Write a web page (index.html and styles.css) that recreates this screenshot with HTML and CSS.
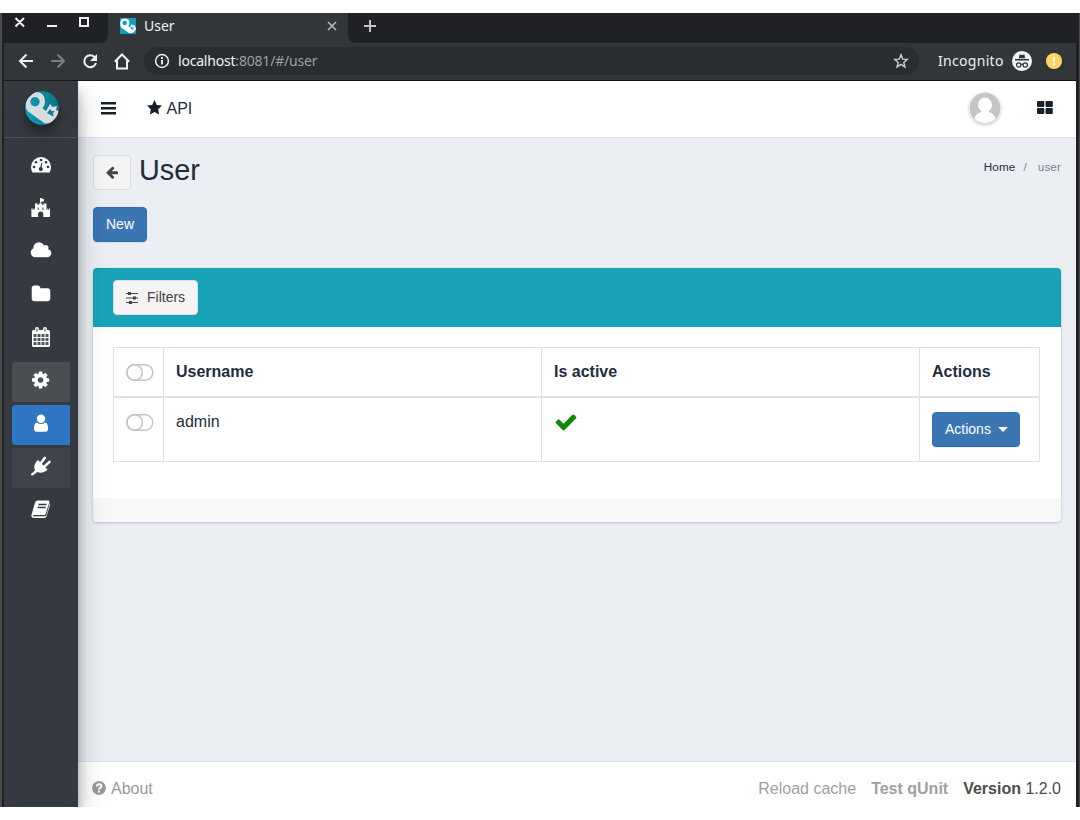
FILE: index.html
```html
<!DOCTYPE html>
<html lang="en">
<head>
<meta charset="utf-8">
<title>User</title>
<link rel="stylesheet" href="styles.css">
</head>
<body>
<svg class="defs" width="0" height="0">
  <defs>
    <linearGradient id="teal" x1="0" x2="1"><stop offset="0" stop-color="#0aa0bf"/><stop offset="1" stop-color="#0c7483"/></linearGradient>
    <clipPath id="round"><circle cx="17" cy="17" r="17"/></clipPath>
    <clipPath id="face"><circle cx="16" cy="16" r="15"/></clipPath>
    <g id="mark">
      <path fill-rule="evenodd" d="M.5 10.500 Q1 1 10.500 1 Q20 1 20 10.500 Q20 14 17.500 17.500 L21 20 L25 13 L27.500 16 L32 15 L31 19 L34 20 L33 26 L27 32 L20 32.500 L3 20.500 Q.5 18 .5 10.500Z M10 6 A4.700 4.700 0 1 0 10 15.400 A4.700 4.700 0 1 0 10 6Z M22 22 L25 18 L26.500 20 L29.500 20 L28 22.300 L28.500 25.500 L25.500 24Z"/>
    </g>
    <g id="toggle" fill="none" stroke="#c4c4c4" stroke-width="1.500"><rect x=".8" y=".8" width="26" height="15.500" rx="7.750"/><circle cx="8.600" cy="8.550" r="7.750"/></g>
  </defs>
</svg>
<div class="window">
  <header class="tabstrip">
    <div class="controls">
      <svg width="100" height="30" fill="none" stroke="#f1f1f1" stroke-width="2"><path d="M11.500 5l8.500 8.500M20 5L11.500 13.500M43 13h10M76 5h8v8h-8z"/></svg>
    </div>
    <div class="tab">
      <svg class="favicon" width="16" height="16" viewBox="0 0 34 34"><path fill="#0b9fba" d="M0 0h34v34H0z"/><use href="#mark" fill="#fff"/></svg>
      <span class="tab-title">User</span>
      <svg width="10" height="10" stroke="#b8babc" stroke-width="1.600"><path d="M1 1l8 8M9 1L1 9"/></svg>
    </div>
    <div class="newtab"><svg width="44" height="30" stroke="#c4c5c6" stroke-width="2"><path d="M16 13h12M22 7v12"/></svg></div>
  </header>
  <div class="toolbar">
    <svg class="nav-icons" width="140" height="37" fill="none" stroke="#f1f1f1" stroke-width="2">
      <path d="M29 18H16.500M22.500 11.500L16 18l6.500 6.500"/>
      <path stroke="#7d8082" d="M47 18h12.500M53.500 11.500L60 18l-6.500 6.500"/>
      <path d="M91 14.500A6 6 0 1 0 92 20"/><path fill="#f1f1f1" stroke="none" d="M93 11v7h-7z"/>
      <path d="M110.800 18.800l7.200-7.300 7.200 7.300M113 17v8.500h10V17"/>
    </svg>
    <div class="address">
      <svg width="16" height="16" fill="none" stroke="#eee" stroke-width="1.500"><circle cx="8" cy="8" r="6.400"/><path stroke-width="1.900" d="M8 7v4.500M8 4v1.900"/></svg>
      <span class="url">localhost<i>:8081/#/user</i></span>
      <svg class="bookmark" width="16" height="16" fill="none" stroke="#cfd1d2" stroke-width="1.400"><path d="M8 1.800l1.700 4.300 4.600.3-3.500 3 1.100 4.500L8 11.400l-3.900 2.500 1.100-4.500-3.500-3 4.600-.3z"/></svg>
    </div>
    <span class="incognito">Incognito</span>
    <svg width="20" height="20"><circle cx="10" cy="10" r="10" fill="#f1f3f4"/><g fill="#303336"><path d="M6.800 7.200l.8-3.800 2.400.6 2.400-.6.8 3.800zM3 8h14v1.400H3z"/></g><g fill="none" stroke="#303336" stroke-width="1.200"><circle cx="6.700" cy="14" r="2.200"/><circle cx="13.300" cy="14" r="2.200"/><path d="M9 13.500q1-.6 2 0"/></g></svg>
    <svg class="alert" width="16" height="16"><circle cx="8" cy="8" r="8" fill="#fdd663"/><path fill="#fff" d="M7 4h2v5H7zM7 10.300h2v2H7z"/></svg>
  </div>

  <div class="app">
    <aside class="sidebar">
      <div class="brand"><svg width="34" height="34"><g clip-path="url(#round)"><path fill="url(#teal)" d="M0 0h34v34H0z"/><use href="#mark" fill="#d9dcdf"/></g></svg></div>
      <nav class="menu">
        <a class="item"><svg width="20" height="16"><path fill="#fff" d="M0 10a10 10 0 0 1 20 0q0 3-1.500 5.500H1.500Q0 13 0 10z"/><g fill="#343a40"><circle cx="3" cy="10" r="1.300"/><circle cx="5" cy="5.200" r="1.300"/><circle cx="10" cy="3" r="1.300"/><circle cx="15" cy="5.200" r="1.300"/><circle cx="17" cy="10" r="1.300"/><path d="M10.300 5.800l1 .2-.6 4.200a2 2 0 1 1-1.300-.2z"/></g></svg></a>
        <a class="item"><svg width="20" height="20"><path fill="#fff" fill-rule="evenodd" d="M9 0h.8l3.200 1.200v2l-3.200.7v1.600h1.400V7h1.300V5.500h3V12h.8v-1.500H17V12h.8v-1.500H19V19h-6.700v-3a2.600 2.600 0 0 0-5.200 0v3H.4v-8.500h1.200V12h.8v-1.500h1.200V12h.4V5.500h2.600V7h1.200V5.500H9zM6.700 9.500V12h1V9.500zM11.500 9.500V12h1V9.500z"/></svg></a>
        <a class="item"><svg width="22" height="18" viewBox="0 180 2048 1536"><path fill="#fff" d="M1984 1152q0 159-112.500 271.500t-271.500 112.500h-1088q-185 0-316.500-131.500t-131.500-316.500q0-132 71-241.500t187-163.500q-2-28-2-43 0-212 150-362t362-150q158 0 286.500 88t187.500 230q70-62 166-62 106 0 181 75t75 181q0 75-41 138 129 30 213 134.500t84 239.500z"/></svg></a>
        <a class="item"><svg width="20" height="20" viewBox="0 0 1792 1792"><path fill="#fff" d="M1728 608v704q0 92-66 158t-158 66h-1216q-92 0-158-66t-66-158v-960q0-92 66-158t158-66h320q92 0 158 66t66 158v32h672q92 0 158 66t66 158z"/></svg></a>
        <a class="item"><svg width="18" height="20"><path fill="#fff" d="M1.500 3H3V2q0-2 2-2t2 2v1h4V2q0-2 2-2t2 2v1h1.500Q18 3 18 4.500v14q0 1.500-1.500 1.500h-15Q0 20 0 18.500v-14Q0 3 1.500 3z"/><path fill="none" stroke="#343a40" d="M5 1.500v3M13 1.500v3"/><path fill="#343a40" d="M1.500 7h3v3h-3zM5.500 7h3v3h-3zM9.500 7h3v3h-3zM13.500 7h3v3h-3zM1.500 11h3v3h-3zM5.500 11h3v3h-3zM9.500 11h3v3h-3zM13.500 11h3v3h-3zM1.500 15h3v3h-3zM5.500 15h3v3h-3zM9.500 15h3v3h-3zM13.500 15h3v3h-3z" opacity=".85"/></svg></a>
        <a class="item open"><svg width="20" height="20" viewBox="40 0 1792 1792"><path fill="#fff" d="M1152 896q0-106-75-181t-181-75-181 75-75 181 75 181 181 75 181-75 75-181zm512-109v222q0 12-8 23t-20 13l-185 28q-19 54-39 91 35 50 107 138 10 12 10 25t-9 23q-27 37-99 108t-94 71q-12 0-26-9l-138-108q-44 23-91 38-16 136-29 186-7 28-36 28h-222q-14 0-24.500-8.500t-11.500-21.500l-28-184q-49-16-90-37l-141 107q-10 9-25 9-14 0-25-11-126-114-165-168-7-10-7-23 0-12 8-23 15-21 51-66.500t54-70.500q-27-50-41-99l-183-27q-13-2-21-12.500t-8-23.500v-222q0-12 8-23t19-13l186-28q14-46 39-92-40-57-107-138-10-12-10-24 0-10 9-23 26-36 98.500-107.500t94.500-71.500q13 0 26 10l138 107q44-23 91-38 16-136 29-186 7-28 36-28h222q14 0 24.500 8.500t11.500 21.500l28 184q49 16 90 37l142-107q9-9 24-9 13 0 25 10 129 119 165 170 7 8 7 22 0 12-8 23-15 21-51 66.500t-54 70.500q26 50 41 98l183 28q13 2 21 12.500t8 23.500z"/></svg></a>
        <a class="item active"><svg width="14" height="18"><g fill="#fff"><circle cx="7" cy="4.800" r="4.200"/><path d="M3 8.500q4 3 8 0 3 .5 3 6 0 3.200-2.500 3.200h-9Q0 17.700 0 14.500q0-5.500 3-6z"/></g></svg></a>
        <a class="item hover"><svg width="20" height="20"><path fill="#fff" d="M7 4l9.500 9.500-1.500 1.500q-4.500 3-8.500 1L2 19.300Q.8 20 .2 19T.5 17.600L4 14.500Q2 9.500 5.500 5.500z"/><path fill="none" stroke="#fff" stroke-width="2.500" stroke-linecap="round" d="M10 7l3.900-5.300M13.500 10.500l5-4.700"/></svg></a>
        <a class="item"><svg width="20" height="18"><path fill="#fff" d="M6.500.5H17q1.800 0 1.300 1.700l-3.500 11.500Q14.300 15 13 15H3q-1.500 0-1 1.200h11.500q1.500 0 2-1.500L18.800 3q.6.700.3 1.700l-3.500 11.200Q15 18 13.500 18H3Q.5 18 .3 15.500L3.900 3Q4.500.5 6.500.5z"/><path fill="none" stroke="#343a40" stroke-width="1.300" d="M7.500 4.500h8M6.700 7.500h8"/></svg></a>
      </nav>
    </aside>
    <main class="main">
      <div class="navbar">
        <svg width="16" height="14" fill="#17202b"><path d="M0 1h15v2.500H0zM0 6h15v2.500H0zM0 11h15v2.500H0z"/></svg>
        <a class="api"><svg width="16" height="15"><path fill="#17202b" d="M7.500 0l2.300 4.900 5.200.7-3.800 3.700.9 5.300-4.600-2.500-4.600 2.500.9-5.300L0 5.600l5.200-.7z"/></svg><span>API</span></a>
        <svg class="avatar" width="32" height="32"><circle cx="16" cy="16" r="15.500" fill="#c5c5c5"/><g fill="#fff" clip-path="url(#face)"><ellipse cx="16" cy="12.800" rx="7" ry="7.300"/><path d="M12.500 17h7v3q6 1 7.500 8v6H5v-6q1.500-7 7.500-8z"/></g></svg>
        <svg width="16" height="13" fill="#17202b"><rect width="7.300" height="6" rx="1"/><rect x="8.500" width="7.300" height="6" rx="1"/><rect y="7" width="7.300" height="6" rx="1"/><rect x="8.500" y="7" width="7.300" height="6" rx="1"/></svg>
      </div>
      <div class="content">
        <div class="heading">
          <a class="btn light back"><svg width="14" height="14" viewBox="0 0 1792 1792"><path fill="#444" d="M1664 896v128q0 53-32.500 90.500t-84.500 37.500h-704l293 294q38 36 38 90t-38 90l-75 76q-37 37-90 37-52 0-91-37l-651-652q-37-37-37-90 0-52 37-91l651-650q38-38 91-38 52 0 90 38l75 74q38 38 38 91t-38 91l-293 293h704q52 0 84.500 37.500t32.500 90.500z" transform="translate(0 -100)"/></svg></a>
          <h1>User</h1>
          <div class="crumbs"><a>Home</a><span>/</span><span>user</span></div>
        </div>
        <a class="btn primary">New</a>
        <section class="card">
          <div class="card-head"><a class="btn light filters"><svg width="14" height="14" fill="#444"><path d="M1 2h12v1H1zM1 6.500h12v1H1zM1 11h12v1H1zM3 1h3v3H3zM8 5.500h3v3H8zM4 10h3v3H4z"/></svg>Filters</a></div>
          <div class="card-body">
            <table>
              <colgroup><col class="c-toggle"><col class="c-wide"><col class="c-wide"><col class="c-actions"></colgroup>
              <thead><tr><th><svg width="28" height="18"><use href="#toggle"/></svg></th><th>Username</th><th>Is active</th><th>Actions</th></tr></thead>
              <tbody><tr><td><svg width="28" height="18"><use href="#toggle"/></svg></td><td>admin</td><td><svg class="check" width="24" height="24" viewBox="0 0 1792 1792"><path fill="#138808" d="M1671 566q0 40-28 68l-724 724-136 136q-28 28-68 28t-68-28l-136-136-362-362q-28-28-28-68t28-68l136-136q28-28 68-28t68 28l294 295 656-657q28-28 68-28t68 28l136 136q28 28 28 68z"/></svg></td><td class="act"><a class="btn primary">Actions<b class="caret"></b></a></td></tr></tbody>
            </table>
          </div>
          <div class="card-foot"></div>
        </section>
      </div>
      <footer class="footer">
        <a class="about"><svg width="15" height="14"><circle cx="7" cy="7" r="6.900" fill="#999"/><path fill="none" stroke="#fff" stroke-width="2" d="M4.700 5.500Q5 3.300 7.100 3.300q2.300 0 2.300 1.900 0 1-1.200 1.700T7 8.600M7 9.600v2"/></svg>About</a>
        <a class="reload">Reload cache</a><b class="test">Test qUnit</b><span class="version"><b>Version</b> 1.2.0</span>
      </footer>
    </main>
  </div>
</div>
</body>
</html>
```

FILE: styles.css
```css
* { box-sizing: border-box; }
body { margin: 0; padding: 13px 0; height: 820px; background: #fff; overflow: hidden; font: 16px/24px "Liberation Sans", Arial, sans-serif; color: #1f2d3d; }
svg { display: block; flex: none; }
.defs { position: absolute; }
.window { height: 794px; display: flex; flex-direction: column; background: #202124; border-left: 2px solid #4a4a4a; border-right: 1px solid #4a4a4a; padding: 0 3px 0 2px; }

.tabstrip { height: 30px; display: flex; background: #323639; }
.controls { width: 104px; background: #202124; border-bottom-right-radius: 8px; }
.tab { width: 240px; display: flex; align-items: center; padding: 0 11px 4px 12px; color: #f1f3f4; font: 14px/20px "Noto Sans", sans-serif; }
.tab-title { flex: 1; margin-left: 8px; }
.newtab { flex: 1; background: #202124; border-bottom-left-radius: 8px; }
.toolbar { height: 38px; display: flex; align-items: center; background: #323639; padding-bottom: 1px; border-bottom: 1px solid #1c1214; }
.address { width: 775px; height: 28px; border-radius: 14px; background: #292d30; display: flex; align-items: center; padding: 0 10px; }
.url { flex: 1; margin-left: 8px; font: 14px/20px "Noto Sans", sans-serif; letter-spacing: -.2px; color: #f1f3f4; }
.url i { font-style: normal; color: #9aa0a6; }
.incognito { width: 74px; margin-left: 19px; font: 14px/20px "Noto Sans", sans-serif; letter-spacing: .3px; color: #eee; white-space: nowrap; }
.alert { margin-left: 14px; }

.app { flex: 1; display: flex; min-height: 0; }
.sidebar { width: 74px; flex: none; background: #343a40; box-shadow: 0 14px 28px rgba(0,0,0,.25), 0 10px 10px rgba(0,0,0,.22); z-index: 1; clip-path: inset(0 -50px 0 0); }
.brand { height: 57px; padding: 10px 0 0 21px; border-bottom: 1px solid #4b545c; }
.brand svg { border-radius: 50%; box-shadow: 0 10px 20px rgba(0,0,0,.19), 0 6px 6px rgba(0,0,0,.23); }
.menu { display: flex; flex-direction: column; gap: 3px; padding: 9px 8px 0; }
.item { height: 40px; display: flex; align-items: center; justify-content: center; padding-bottom: 4px; border-radius: 4px 0 0 4px; }
.open { background: #494e53; }
.active { background: #2e75c3; }
.hover { background: #3e444a; }

.main { flex: 1; min-width: 0; display: flex; flex-direction: column; background: #ebeff4; }
.navbar { height: 57px; display: flex; align-items: center; padding: 0 23px 3px; background: #fff; border-bottom: 1px solid #dee2e6; }
.api { display: flex; align-items: center; gap: 3.5px; margin-left: 30px; flex: 1; }
.api span { padding-top: 2px; }
.avatar { margin-right: 36px; border-radius: 50%; box-shadow: 0 1px 3px rgba(0,0,0,.25); }
.content { flex: 1; padding: 17px 15px 0; }
.heading { display: flex; height: 35px; margin-bottom: 17px; }
h1 { flex: 1; margin: -2px 0 0 8px; font-size: 28.8px; line-height: 34px; font-weight: 400; }
.crumbs { display: flex; gap: 8px; font-size: 11.7px; letter-spacing: .12px; line-height: 24px; color: #7b828a; }
.crumbs a { color: #1f2d3d; }
.crumbs span:last-child { margin-left: 3px; }
.btn { display: inline-flex; align-items: center; height: 35px; padding: 0 12px; border: 1px solid; border-radius: 4px; font-size: 14px; line-height: 21px; vertical-align: top; }
.primary { color: #fff; background: #3c75b4; border-color: #2e6fb9; box-shadow: 0 1px 1px rgba(0,0,0,.08); }
.light { color: #444; background: #f4f4f4; border-color: #ddd; }
.back { width: 38px; padding: 0 11px; }
.card { margin-top: 26px; height: 254px; display: flex; flex-direction: column; background: #fff; border-radius: 4px; overflow: hidden; box-shadow: 0 0 1px rgba(0,0,0,.125), 0 1px 3px rgba(0,0,0,.2); }
.card-head { height: 59px; padding: 12px 20px; background: #18a2b8; }
.filters { gap: 8px; padding: 0 12px 0 11px; }
.card-body { flex: 1; padding: 20px 21px 0 20px; }
.card-foot { height: 24px; background: #f7f7f7; }
table { width: 927px; table-layout: fixed; border-collapse: collapse; }
.c-toggle { width: 50px; }
.c-wide { width: 378px; }
.c-actions { width: 120px; }
th, td { border: 1px solid #dee2e6; padding: 12px; text-align: left; vertical-align: top; }
th { height: 49px; border-bottom-width: 2px; }
td { height: 64px; }
th svg, td svg { margin-top: 4px; }
td .check { margin-top: 0; }
td.act { padding-top: 14px; padding-bottom: 12px; line-height: 0; }
.caret { margin-left: 7px; margin-right: -1px; border: 5px solid transparent; border-top-color: #fff; border-bottom: 0; }

.footer { height: 46px; display: flex; align-items: center; padding: 8px 15px 0; background: #fff; border-top: 1px solid #dee2e6; color: #a0a0a0; }
.about { flex: 1; display: flex; align-items: center; gap: 4px; margin-left: -1px; color: #999; }
.about svg { margin-top: -1px; }
.test { margin: 0 15px; }
.version { color: #4c4c4c; }
```
